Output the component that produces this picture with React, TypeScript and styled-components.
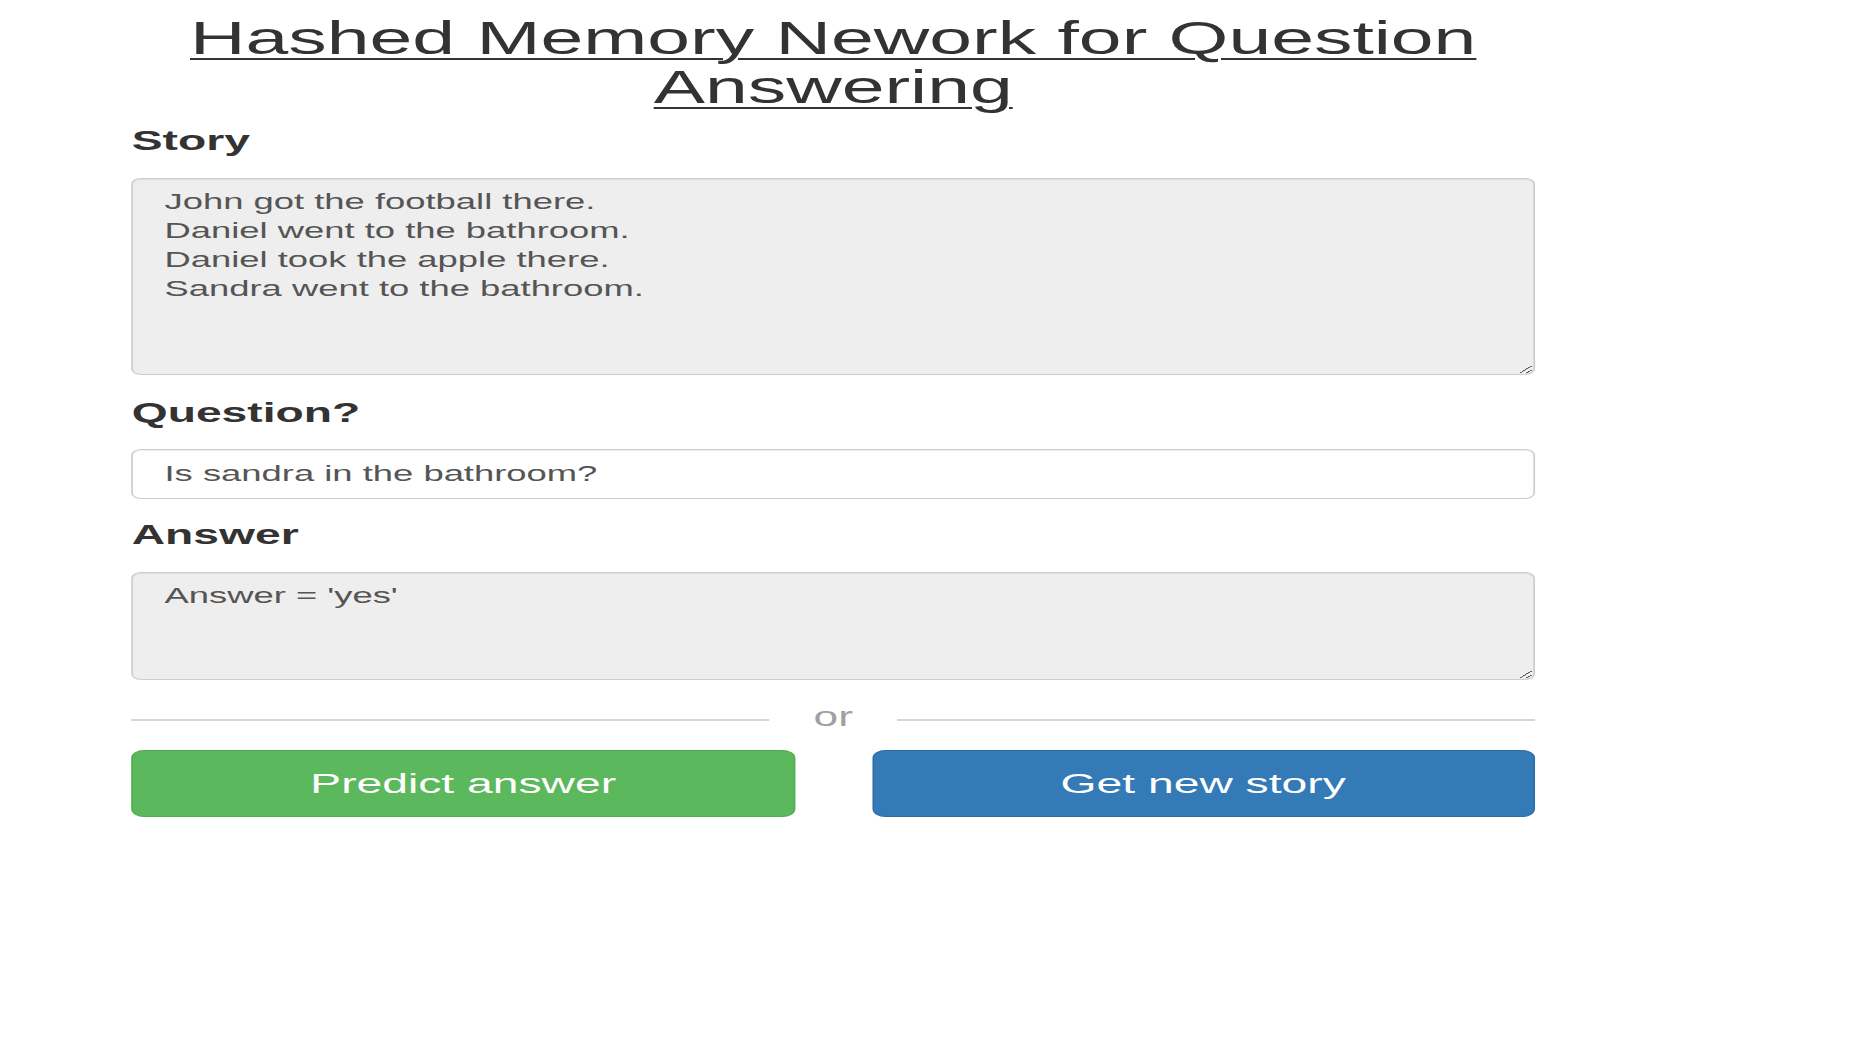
import React from "react";
import styled, { createGlobalStyle } from "styled-components";

// The reference page is rendered wider than it is tall: everything is
// stretched horizontally by this factor.
const STRETCH = 1.64;

const GlobalStyle = createGlobalStyle`
  html, body {
    margin: 0;
    padding: 0;
    background: #ffffff;
  }
  body {
    font-family: "Liberation Sans", Arial, Helvetica, sans-serif;
    color: #333333;
    overflow: hidden;
  }
  * {
    box-sizing: border-box;
  }
`;

const Stage = styled.div`
  width: ${1855 / STRETCH}px;
  transform: scaleX(${STRETCH});
  transform-origin: 0 0;
`;

const Container = styled.main`
  width: 855.5px;
  margin-left: 80.3px;
  display: flex;
  flex-direction: column;
`;

const Title = styled.h1`
  margin: 0;
  padding-top: 14px;
  font-size: 46.9px;
  line-height: 49.3px;
  font-weight: 400;
  text-align: center;
  color: #333333;
  text-decoration: underline;
  text-decoration-thickness: 2px;
  text-underline-offset: 3.5px;
`;

const Label = styled.label<{ $top: number; $bottom: number }>`
  display: block;
  margin: ${(p) => p.$top}px 0 ${(p) => p.$bottom}px;
  font-size: 28.2px;
  line-height: 30.5px;
  font-weight: 700;
  color: #333333;
`;

const TextArea = styled.textarea<{ $height: number }>`
  display: block;
  width: 100%;
  height: ${(p) => p.$height}px;
  margin: 0;
  padding: 7.5px 19px;
  border: 1px solid #cccccc;
  border-radius: 6px;
  background: #eeeeee;
  color: #555555;
  font-family: "Liberation Sans", Arial, Helvetica, sans-serif;
  font-size: 22.2px;
  line-height: 29.3px;
  box-shadow: inset 0 1px 1px rgba(0, 0, 0, 0.075);
  resize: vertical;
  outline: none;
  overflow: hidden;
`;

const TextInput = styled.input`
  display: block;
  width: 100%;
  height: 50px;
  margin: 0;
  padding: 0 19px;
  border: 1px solid #cccccc;
  border-radius: 6px;
  background: #ffffff;
  color: #555555;
  font-family: "Liberation Sans", Arial, Helvetica, sans-serif;
  font-size: 22.2px;
  line-height: 31.4px;
  box-shadow: inset 0 1px 1px rgba(0, 0, 0, 0.075);
  outline: none;
`;

const Divider = styled.div`
  display: flex;
  align-items: center;
  gap: 26.8px;
  margin-top: 21.8px;
  height: 31px;
`;

const DividerLine = styled.span`
  flex: 1;
  height: 2px;
  margin-top: 5px;
  background: #d6d6d6;
`;

const DividerText = styled.span`
  font-size: 27px;
  line-height: 31px;
  color: #a0a0a0;
`;

const ButtonRow = styled.div`
  display: grid;
  grid-template-columns: 1fr 1fr;
  column-gap: 47px;
  margin-top: 17.2px;
`;

const Button = styled.button<{ $variant: "success" | "primary" }>`
  display: flex;
  align-items: center;
  justify-content: center;
  height: 67.3px;
  margin: 0;
  padding: 1px 16px 0;
  border: 1px solid
    ${(p) => (p.$variant === "success" ? "#4cae4c" : "#2e6da4")};
  border-radius: 8px;
  background: ${(p) => (p.$variant === "success" ? "#5cb85c" : "#337ab7")};
  color: #ffffff;
  font-family: "Liberation Sans", Arial, Helvetica, sans-serif;
  font-size: 28.2px;
  line-height: 36.9px;
  cursor: pointer;
`;

const story = [
  "John got the football there.",
  "Daniel went to the bathroom.",
  "Daniel took the apple there.",
  "Sandra went to the bathroom.",
].join("\n");

export default function App() {
  return (
    <>
      <GlobalStyle />
      <Stage>
        <Container>
          <Title>Hashed Memory Nework for Question Answering</Title>

          <Label htmlFor="story" $top={12.3} $bottom={22.7}>
            Story
          </Label>
          <TextArea id="story" $height={196.7} value={story} readOnly />

          <Label htmlFor="question" $top={21.8} $bottom={22}>
            Question?
          </Label>
          <TextInput
            id="question"
            type="text"
            value="Is sandra in the bathroom?"
            readOnly
          />

          <Label htmlFor="answer" $top={19.5} $bottom={23.4}>
            Answer
          </Label>
          <TextArea id="answer" $height={107.3} value="Answer = 'yes'" readOnly />

          <Divider>
            <DividerLine />
            <DividerText>or</DividerText>
            <DividerLine />
          </Divider>

          <ButtonRow>
            <Button type="button" $variant="success">
              Predict answer
            </Button>
            <Button type="button" $variant="primary">
              Get new story
            </Button>
          </ButtonRow>
        </Container>
      </Stage>
    </>
  );
}
